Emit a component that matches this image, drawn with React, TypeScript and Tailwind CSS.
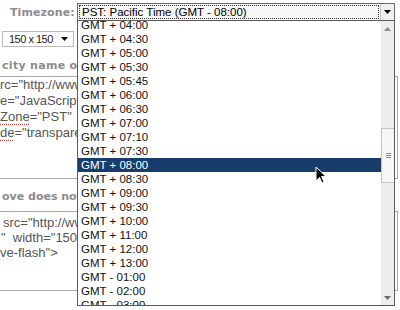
import React from "react";

const ZONES = [
  "GMT + 04:00",
  "GMT + 04:30",
  "GMT + 05:00",
  "GMT + 05:30",
  "GMT + 05:45",
  "GMT + 06:00",
  "GMT + 06:30",
  "GMT + 07:00",
  "GMT + 07:10",
  "GMT + 07:30",
  "GMT + 08:00",
  "GMT + 08:30",
  "GMT + 09:00",
  "GMT + 09:30",
  "GMT + 10:00",
  "GMT + 11:00",
  "GMT + 12:00",
  "GMT + 13:00",
  "GMT - 01:00",
  "GMT - 02:00",
  "GMT - 03:00",
];

const SELECTED = "GMT + 08:00";

const label = "font-['DejaVu_Sans',sans-serif] font-bold text-[11px] leading-[14px] text-[#8c8c8c] whitespace-nowrap";
const code = "font-['Liberation_Sans',Arial,sans-serif] text-[13px] text-[#555] whitespace-nowrap";
const squiggle = "underline decoration-dotted decoration-[#d24a4a] underline-offset-[3px]";

const Arrow = ({ up = false, color = "#000" }: { up?: boolean; color?: string }) => (
  <svg width="7" height="4" viewBox="0 0 7 4" className="block">
    <path d={up ? "M0 4 L3.5 0 L7 4 Z" : "M0 0 L7 0 L3.5 4 Z"} fill={color} />
  </svg>
);

export default function App() {
  return (
    <div className="relative w-[400px] h-[310px] overflow-hidden bg-white">
      {/* timezone row */}
      <div className="flex items-start pt-[3px]">
        <div className={`${label} w-[77px] pl-[10px] pt-[3px] tracking-[0.1px]`}>Timezone:</div>
        <div className="flex w-[318px] h-[18px] border border-[#6a6a6a] bg-[#f7f7f7]">
          <div className="flex-1 m-[1px] border border-dotted border-[#333] pl-[2px] font-['Liberation_Sans',Arial,sans-serif] text-[11.5px] leading-[13px] text-black whitespace-nowrap">
            PST: Pacific Time (GMT - 08:00)
          </div>
          <div className="w-[14px] flex items-center justify-center border-l border-[#c8c8c8] bg-[#f0f0f0]">
            <Arrow />
          </div>
        </div>
      </div>

      {/* page behind the dropdown, clipped where the list covers it */}
      <div className="flex flex-col">
        <div className="mt-[10px] ml-[2px] w-[72px] h-[16px] border border-[#b8b8b8] bg-white flex items-center pl-[6px] pr-[5px]">
          <span className="font-['Liberation_Sans',Arial,sans-serif] text-[11px] tracking-[-0.5px] text-[#222] whitespace-nowrap">
            150 x 150
          </span>
          <span className="ml-auto">
            <Arrow />
          </span>
        </div>

        <div className={`${label} mt-[12px] pl-[2px] w-[77px] overflow-hidden tracking-[0.3px]`}>city name or zip</div>

        <div className="mt-[3px] ml-[-1px] w-[399px] h-[103px] border border-[#a8a8a8] leading-[16px]">
          <div className="w-[77px] overflow-hidden">
            <div className={code}>rc="http://www.example.com</div>
            <div className={code}>e="JavaScript"</div>
            <div className={code}>
              <span className={squiggle}>Zone</span>="PST"
            </div>
            <div className={code}>
              <span className={squiggle}>de</span>="transparent"
            </div>
          </div>
        </div>

        <div className={`${label} mt-[11px] pl-[2px] w-[77px] overflow-hidden`}>ove does not work</div>

        <div className="mt-[7px] ml-[-1px] w-[399px] h-[80px] border border-[#a8a8a8] pt-[3px] leading-[15px]">
          <div className="w-[77px] overflow-hidden">
            <div className={`${code} pl-[3px]`}>src="http://www.example</div>
            <div className={`${code} pl-[1px]`}>"&nbsp;&nbsp;width="150"</div>
            <div className={code}>
              <span className={squiggle}>ve</span>-flash"&gt;
            </div>
          </div>
        </div>
      </div>

      {/* open dropdown list */}
      <div className="absolute left-[77px] top-[20px] w-[318px] h-[286px] border border-[#5a5a5a] bg-white flex">
        <div className="flex-1 overflow-hidden">
          <div className="mt-[-3px]">
            {ZONES.map((z) => (
              <div
                key={z}
                className={`h-[14px] leading-[14px] pl-[3px] font-['Liberation_Sans',Arial,sans-serif] text-[11.5px] whitespace-nowrap ${
                  z === SELECTED ? "bg-[#183c6b] text-white" : "text-[#111]"
                }`}
              >
                {z}
              </div>
            ))}
          </div>
        </div>
        <div className="w-[13px] bg-[#ededed] flex flex-col">
          <div className="h-[15px] flex items-center justify-center">
            <Arrow up color="#8a8a8a" />
          </div>
          <div className="h-[92px]" />
          <div className="h-[55px] bg-[#f6f6f6] border border-[#c4c4c4] border-r-0 flex flex-col items-center justify-center gap-[1px]">
            <div className="w-[5px] h-[1px] bg-[#8a8a8a]" />
            <div className="w-[5px] h-[1px] bg-[#8a8a8a]" />
            <div className="w-[5px] h-[1px] bg-[#8a8a8a]" />
          </div>
          <div className="flex-1" />
          <div className="h-[15px] flex items-center justify-center">
            <Arrow color="#6a6a6a" />
          </div>
        </div>
      </div>

      {/* mouse pointer */}
      <svg width="13" height="19" viewBox="0 0 13 19" className="absolute left-[315px] top-[166px]">
        <path d="M1 1 L1 15 L4.5 11.5 L7 17 L9 16 L6.6 10.6 L11 10.6 Z" fill="#000" stroke="#fff" strokeWidth="1" />
      </svg>
    </div>
  );
}
